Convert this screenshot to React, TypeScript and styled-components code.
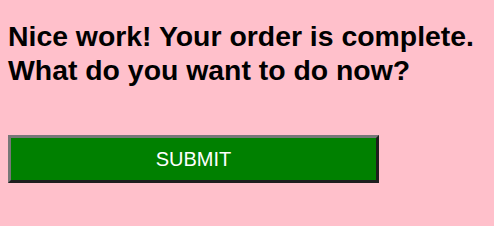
import styled, { createGlobalStyle } from "styled-components";

const GlobalStyle = createGlobalStyle`
  html, body {
    margin: 0;
    background: #ffc0cb;
  }
  body {
    padding: 8px;
    font-family: "Liberation Sans", Arial, sans-serif;
  }
`;

const Page = styled.div`
  display: flex;
  flex-direction: column;
  align-items: flex-start;
`;

const Title = styled.h2`
  margin: 11px 0 0;
  font-size: 28.4px;
  line-height: 34px;
  font-weight: bold;
  color: #000;
`;

const SubmitButton = styled.button`
  margin-top: 48px;
  width: 371px;
  height: 48px;
  background: #008000;
  color: #fff;
  font-family: "Liberation Sans", Arial, sans-serif;
  font-size: 20px;
  border: 3px solid #777;
  border-right-color: #1e1e1e;
  border-bottom-color: #1e1e1e;
  cursor: pointer;
`;

const App = () => {
  return (
    <>
      <GlobalStyle />
      <Page>
        <Title>
          Nice work! Your order is complete.
          <br />
          What do you want to do now?
        </Title>
        <SubmitButton type="button">SUBMIT</SubmitButton>
      </Page>
    </>
  );
};

export default App;
